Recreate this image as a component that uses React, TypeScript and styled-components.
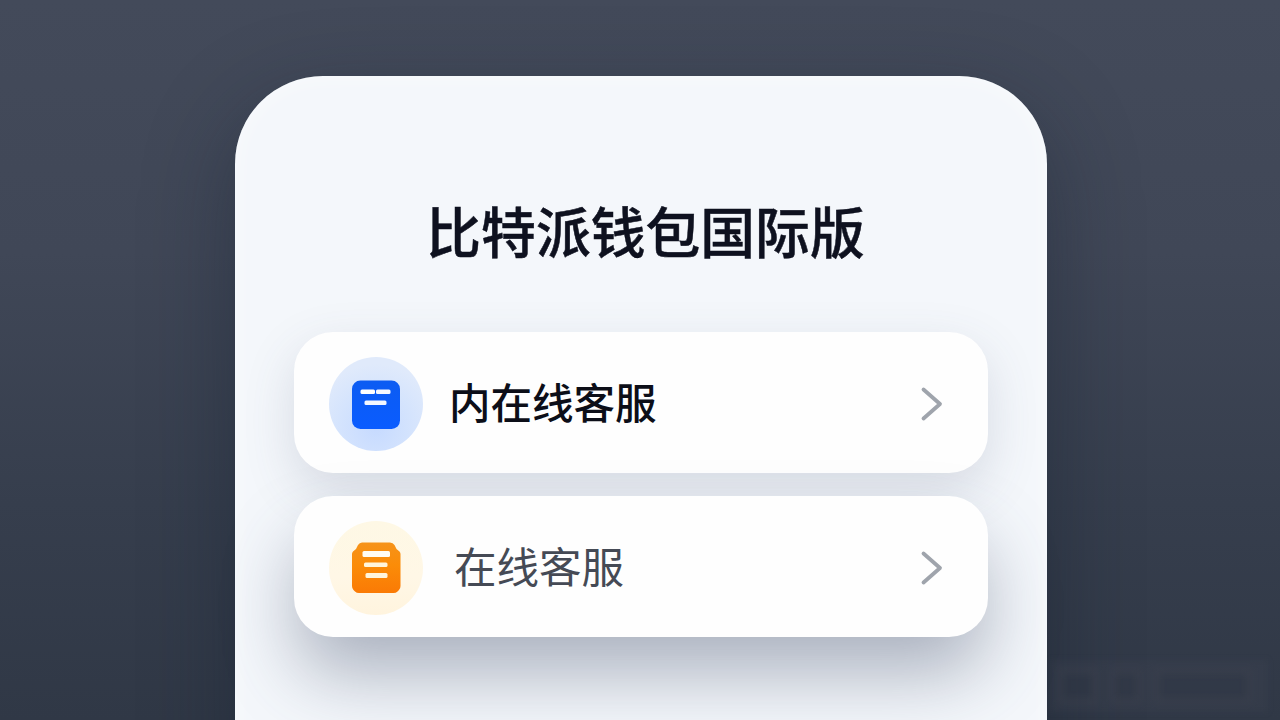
import React from 'react';
import styled, { createGlobalStyle } from 'styled-components';

const GlobalStyle = createGlobalStyle`
    * {
        box-sizing: border-box;
    }

    body {
        margin: 0;
        overflow: hidden;
        font-family: "Noto Sans CJK SC", "Noto Sans", sans-serif;
    }
`;

const WalletIcon = () => (
    <svg width="94" height="94" viewBox="0 0 94 94" fill="none">
        <defs>
            <linearGradient id="walletFill" x1="0" y1="0" x2="0" y2="1">
                <stop offset="0" stopColor="#0c5cf2"/>
                <stop offset="1" stopColor="#0a5cff"/>
            </linearGradient>
        </defs>
        <rect x="23" y="23.5" width="48" height="48.5" rx="8.5" fill="url(#walletFill)"/>
        <rect x="31.5" y="32.5" width="14.5" height="4.5" rx="1.5" fill="#fff"/>
        <rect x="47" y="32.5" width="14.5" height="4.5" rx="1.5" fill="#f4f8ff"/>
        <rect x="35.5" y="43.5" width="22" height="4.5" rx="1.5" fill="#f4f8ff"/>
    </svg>
);

const NoteIcon = () => (
    <svg width="94" height="94" viewBox="0 0 94 94" fill="none">
        <defs>
            <linearGradient id="noteFill" x1="0" y1="0" x2="0" y2="1">
                <stop offset="0" stopColor="#f6931a"/>
                <stop offset="0.45" stopColor="#fb8c08"/>
                <stop offset="1" stopColor="#fa7a05"/>
            </linearGradient>
        </defs>
        <path
            d="M33 21.5H61Q64 21.5 65.5 24L67.5 28L70.5 30.5Q71.5 31.5 71.5 33V65Q71.5 67.5 70 69L68.5 70.5Q67 72 64.5 72H30Q27.5 72 26 70.5L24.5 69Q23 67.5 23 65V33Q23 31.5 24 30.5L27 28L29 24Q30.5 21.5 33 21.5Z"
            fill="url(#noteFill)"
        />
        <rect x="33.5" y="30" width="27.5" height="6" rx="1.5" fill="#fffdf5"/>
        <rect x="35" y="41.5" width="23.5" height="4.5" rx="1.5" fill="#fff5dc"/>
        <rect x="36.5" y="52" width="22" height="5" rx="1.5" fill="#fff5dc"/>
    </svg>
);

const Chevron = () => (
    <svg width="24" height="38" viewBox="0 0 24 38" fill="none">
        <path d="M4.5 4.5L21 19L4.5 33.5" stroke="#9fa4ac" strokeWidth="3.8" strokeLinecap="round" strokeLinejoin="round"/>
    </svg>
);

const App = () => {
    return (
        <Page>
            <GlobalStyle/>
            <Panel>
                <Title>比特派钱包国际版</Title>
                <Menu>
                    <MenuItem $shadow="0 18px 50px rgba(71, 85, 110, 0.17)">
                        <Badge $background="radial-gradient(circle at 50% 75%, #c6daff 0%, #d5e4fd 45%, #e0eafb 75%)">
                            <WalletIcon/>
                        </Badge>
                        <Label $primary>内在线客服</Label>
                        <Chevron/>
                    </MenuItem>
                    <MenuItem $shadow="0 40px 72px -4px rgba(61, 72, 100, 0.4)">
                        <Badge $background="linear-gradient(180deg, #fef8e5 0%, #fff7e6 60%, #fff4de 100%)">
                            <NoteIcon/>
                        </Badge>
                        <Label>在线客服</Label>
                        <Chevron/>
                    </MenuItem>
                </Menu>
            </Panel>
            <Watermark>
                <Smudge $width={40}/>
                <Smudge $width={32}/>
                <Smudge $width={98}/>
            </Watermark>
        </Page>
    );
};

export default App;

// Styled components

const Page = styled.main`
    position: relative;
    width: 1280px;
    height: 720px;
    padding: 76px 233px 0 235px;
    overflow: hidden;
    background: linear-gradient(180deg, #434a5a 0%, #404757 35%, #363e4d 70%, #303846 100%);
`;

const Panel = styled.section`
    height: 760px;
    padding: 0 59px;
    border-radius: 88px 88px 0 0;
    background: #f4f7fb;
    box-shadow: 0 30px 90px rgba(20, 30, 45, 0.4), inset 0 0 24px rgba(255, 255, 255, 0.5);
`;

const Title = styled.h1`
    margin: 0;
    padding: 113px 0 0 9px;
    height: 256px;
    text-align: center;
    white-space: nowrap;
    font-size: 54.8px;
    line-height: 81px;
    font-weight: 500;
    color: #0e111f;
    -webkit-text-stroke: 0.5px #0e111f;
`;

const Menu = styled.div`
    display: flex;
    flex-direction: column;
    gap: 23px;
`;

const MenuItem = styled.div<{ $shadow: string }>`
    display: flex;
    align-items: center;
    height: 141px;
    padding: 3px 45px 0 35px;
    border-radius: 39px;
    background: #fefefe;
    box-shadow: ${({ $shadow }) => $shadow};
`;

const Badge = styled.div<{ $background: string }>`
    flex-shrink: 0;
    width: 94px;
    height: 94px;
    border-radius: 50%;
    background: ${({ $background }) => $background};
`;

const Label = styled.span<{ $primary?: boolean }>`
    flex-grow: 1;
    padding: 0 0 7px ${({ $primary }) => ($primary ? '26px' : '31px')};
    font-size: ${({ $primary }) => ($primary ? '41.5px' : '42.5px')};
    line-height: 60px;
    font-weight: ${({ $primary }) => ($primary ? 500 : 400)};
    color: ${({ $primary }) => ($primary ? '#0c0e18' : '#454a55')};
`;

/* faint plate in the corner of the page */
const Watermark = styled.div`
    position: absolute;
    right: 12px;
    bottom: 8px;
    display: flex;
    align-items: center;
    gap: 12px;
    width: 218px;
    height: 52px;
    padding: 0 8px;
    background: rgba(82, 84, 102, 0.12);
    filter: blur(3px);
`;

const Smudge = styled.div<{ $width: number }>`
    width: ${({ $width }) => $width}px;
    height: 36px;
    border: 6px solid rgba(84, 84, 102, 0.16);
    background: rgba(32, 36, 50, 0.1);
`;
